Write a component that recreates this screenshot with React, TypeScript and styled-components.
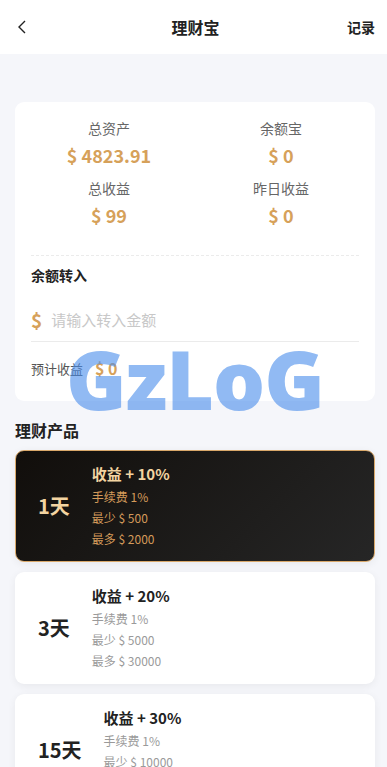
import React from "react";
import styled, { createGlobalStyle } from "styled-components";

const Global = createGlobalStyle`
  html, body { margin: 0; padding: 0; background: #f5f6fa; }
  body { font-family: "Noto Sans CJK SC", "Noto Sans", sans-serif; }
  * { box-sizing: border-box; }
`;

const Page = styled.div`
  position: relative;
  width: 387px;
  min-height: 767px;
  background: #f5f6fa;
  overflow: hidden;
`;

const Header = styled.header`
  height: 54px;
  background: #fff;
  display: grid;
  grid-template-columns: 60px 1fr 60px;
  align-items: center;
  padding: 0 12px 0 16px;
`;

const BackBtn = styled.div`
  display: flex;
  align-items: center;
`;

const Title = styled.h1`
  margin: 0;
  text-align: center;
  font-size: 16px;
  font-weight: 700;
  color: #222;
`;

const HeaderLink = styled.div`
  text-align: right;
  font-size: 14px;
  font-weight: 700;
  color: #222;
`;

const Content = styled.main`
  padding: 48px 12px 20px 15px;
`;

const Card = styled.section`
  background: #fff;
  border-radius: 9px;
  padding: 16px 16px 21px;
`;

const StatsGrid = styled.div`
  display: grid;
  grid-template-columns: 1fr 1fr;
  margin: 0 -8px;
  row-gap: 9px;
`;

const Stat = styled.div`
  display: flex;
  flex-direction: column;
  align-items: center;
`;

const StatLabel = styled.div`
  font-size: 14px;
  color: #666;
  line-height: 20px;
`;

const StatValue = styled.div`
  font-size: 18px;
  font-weight: 700;
  color: #d6a15a;
  line-height: 28px;
  margin-top: 3px;
`;

const Divider = styled.div`
  margin-top: 26px;
  border-top: 1px dashed #ebebeb;
`;

const SectionLabel = styled.div`
  margin-top: 8px;
  font-size: 14px;
  font-weight: 700;
  color: #222;
  line-height: 22px;
`;

const InputRow = styled.div`
  margin-top: 12px;
  height: 44px;
  display: flex;
  align-items: center;
  gap: 9px;
  border-bottom: 1px solid #ebebeb;
`;

const Currency = styled.span`
  font-size: 19px;
  font-weight: 700;
  color: #d6a15a;
`;

const AmountInput = styled.input`
  flex: 1;
  border: none;
  outline: none;
  font-family: inherit;
  font-size: 15px;
  color: #333;
  padding: 0;
  background: transparent;
  &::placeholder { color: #c8c8c8; }
`;

const EstimateRow = styled.div`
  margin-top: 14px;
  display: flex;
  align-items: center;
  gap: 12px;
  font-size: 13px;
  color: #555;
`;

const EstimateValue = styled.span`
  font-size: 16px;
  font-weight: 700;
  color: #d6a15a;
`;

const ListTitle = styled.h2`
  margin: 17px 0 8px;
  font-size: 16px;
  font-weight: 700;
  color: #222;
  line-height: 24px;
`;

const Product = styled.div<{ $active?: boolean }>`
  display: flex;
  align-items: center;
  gap: 22px;
  padding: 11px 22px 12px;
  margin-bottom: 10px;
  border-radius: 9px;
  border: 1px solid ${(p) => (p.$active ? "#d9a86a" : "transparent")};
  background: ${(p) =>
    p.$active ? "linear-gradient(135deg, #110e0b 0%, #262626 100%)" : "#fff"};
  box-shadow: 0 2px 8px rgba(0, 0, 0, 0.06);
`;

const Days = styled.div<{ $active?: boolean }>`
  font-size: 20px;
  font-weight: 700;
  color: ${(p) => (p.$active ? "#f3d4a1" : "#222")};
`;

const Info = styled.div`
  display: flex;
  flex-direction: column;
`;

const Rate = styled.div<{ $active?: boolean }>`
  font-size: 15px;
  font-weight: 700;
  line-height: 24px;
  color: ${(p) => (p.$active ? "#f3d4a1" : "#222")};
`;

const Detail = styled.div<{ $active?: boolean }>`
  font-size: 12px;
  line-height: 21px;
  color: ${(p) => (p.$active ? "#d49a5a" : "#9a9a9a")};
`;

const Watermark = styled.div`
  position: absolute;
  left: 66px;
  top: 328px;
  font-family: "Open Sans", "DejaVu Sans", sans-serif;
  font-weight: 800;
  font-size: 82px;
  line-height: 100px;
  letter-spacing: -1px;
  color: rgba(72, 140, 235, 0.6);
  pointer-events: none;
`;

const products = [
  { days: "1天", rate: "收益 + 10%", fee: "手续费 1%", min: "最少 $ 500", max: "最多 $ 2000", active: true },
  { days: "3天", rate: "收益 + 20%", fee: "手续费 1%", min: "最少 $ 5000", max: "最多 $ 30000" },
  { days: "15天", rate: "收益 + 30%", fee: "手续费 1%", min: "最少 $ 10000", max: "最多 $ 60000" },
];

export default function App() {
  return (
    <Page>
      <Global />
      <Header>
        <BackBtn>
          <svg width="12" height="16" viewBox="0 0 12 16" fill="none">
            <path d="M9 2 L3 8 L9 14" stroke="#222" strokeWidth="1.4" />
          </svg>
        </BackBtn>
        <Title>理财宝</Title>
        <HeaderLink>记录</HeaderLink>
      </Header>
      <Content>
        <Card>
          <StatsGrid>
            <Stat>
              <StatLabel>总资产</StatLabel>
              <StatValue>$ 4823.91</StatValue>
            </Stat>
            <Stat>
              <StatLabel>余额宝</StatLabel>
              <StatValue>$ 0</StatValue>
            </Stat>
            <Stat>
              <StatLabel>总收益</StatLabel>
              <StatValue>$ 99</StatValue>
            </Stat>
            <Stat>
              <StatLabel>昨日收益</StatLabel>
              <StatValue>$ 0</StatValue>
            </Stat>
          </StatsGrid>
          <Divider />
          <SectionLabel>余额转入</SectionLabel>
          <InputRow>
            <Currency>$</Currency>
            <AmountInput placeholder="请输入转入金额" />
          </InputRow>
          <EstimateRow>
            预计收益 <EstimateValue>$ 0</EstimateValue>
          </EstimateRow>
        </Card>
        <ListTitle>理财产品</ListTitle>
        {products.map((p) => (
          <Product key={p.days} $active={p.active}>
            <Days $active={p.active}>{p.days}</Days>
            <Info>
              <Rate $active={p.active}>{p.rate}</Rate>
              <Detail $active={p.active}>{p.fee}</Detail>
              <Detail $active={p.active}>{p.min}</Detail>
              <Detail $active={p.active}>{p.max}</Detail>
            </Info>
          </Product>
        ))}
      </Content>
      <Watermark>GzLoG</Watermark>
    </Page>
  );
}
